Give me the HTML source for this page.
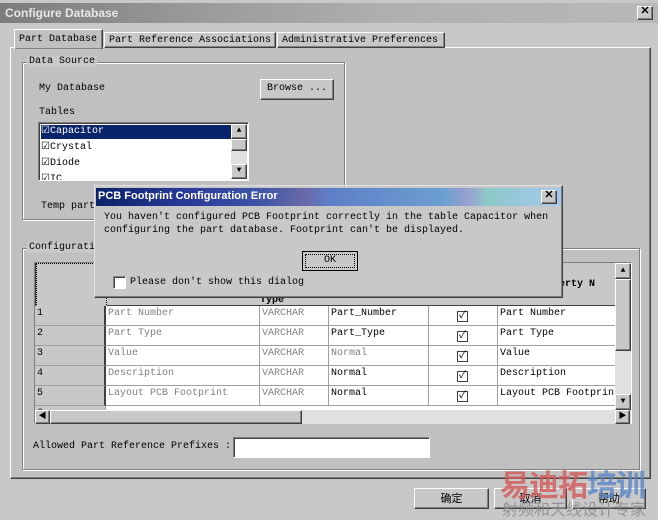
<!DOCTYPE html>
<html><head><meta charset="utf-8"><style>
*{margin:0;padding:0;box-sizing:border-box}
body{width:658px;height:518px;background:#c8c8c8;position:relative;overflow:hidden;font-family:"Liberation Mono","Noto Sans CJK SC",monospace;font-size:10px;color:#000}
.a{position:absolute;white-space:nowrap}
.raised{background:#c8c8c8;border:1px solid;border-color:#fff #404040 #404040 #fff;box-shadow:inset -1px -1px #808080}
.sunk{border:1px solid;border-color:#808080 #fff #fff #808080;box-shadow:inset 1px 1px #404040}
.grp{border:1px solid #808080;box-shadow:1px 1px #fff,inset 1px 1px #fff}
.lbl{background:#c8c8c8;padding:0 2px}
.btn{text-align:center;line-height:18px}
.cell{position:absolute;height:20px;border-right:1px solid #a0a0a0;border-bottom:1px solid #a0a0a0;background:#fff;padding:2px 2px;white-space:nowrap;overflow:hidden}
.g{color:#808080}
.cb{position:absolute;width:11px;height:11px;border:1px solid #404040;background:#fff;font-size:10px;line-height:9px;text-align:center}
</style></head><body>
<div class="a" style="left:0;top:3px;width:658px;height:20px;background:linear-gradient(90deg,#7c7c7c 0,#9a9a9a 30%,#b0b0b0 60%,#b8b8b8 100%)"></div>
<div class="a" style="left:5px;top:6px;color:#e8e8e8;font-family:'Liberation Sans',sans-serif;font-weight:bold;font-size:12px">Configure Database</div>
<div class="a raised btn" style="left:637px;top:6px;width:16px;height:14px;line-height:11px;font-weight:bold;font-size:11px">✕</div>
<div class="a raised" style="left:10px;top:47px;width:641px;height:432px;background:#c0c0c0"></div>
<div class="a raised" style="left:14px;top:29px;width:89px;height:20px;border-bottom:none;background:#c0c0c0;padding:4px 4px">Part Database</div>
<div class="a raised" style="left:104px;top:32px;width:172px;height:16px;padding:2px 4px">Part Reference Associations</div>
<div class="a raised" style="left:277px;top:32px;width:168px;height:16px;padding:2px 4px">Administrative Preferences</div>
<div class="a grp" style="left:22px;top:62px;width:323px;height:158px"></div>
<div class="a lbl" style="left:27px;top:56px">Data Source</div>
<div class="a" style="left:39px;top:83px">My Database</div>
<div class="a raised btn" style="left:260px;top:79px;width:74px;height:21px">Browse ...</div>
<div class="a" style="left:39px;top:107px">Tables</div>
<div class="a sunk" style="left:38px;top:122px;width:211px;height:59px;background:#fff;overflow:hidden">
 <div class="a" style="left:2px;top:2px;width:190px;height:14px;background:#0a246a"></div>
 <div class="a" style="left:2px;top:2px;line-height:14px;color:#fff">☑Capacitor</div>
 <div class="a" style="left:2px;top:18px;line-height:14px">☑Crystal</div>
 <div class="a" style="left:2px;top:34px;line-height:14px">☑Diode</div>
 <div class="a" style="left:2px;top:50px;line-height:14px">☑IC</div>
 <div class="a" style="left:192px;top:1px;width:16px;height:55px;background:#e0e0e0"></div>
 <div class="a raised btn" style="left:192px;top:1px;width:16px;height:15px;line-height:12px;font-size:8px">▲</div>
 <div class="a raised" style="left:192px;top:16px;width:16px;height:12px"></div>
 <div class="a raised btn" style="left:192px;top:41px;width:16px;height:15px;line-height:12px;font-size:8px">▼</div>
</div>
<div class="a" style="left:41px;top:201px">Temp part</div>
<div class="a grp" style="left:22px;top:248px;width:618px;height:222px"></div>
<div class="a lbl" style="left:27px;top:242px">Configuration</div>
<div class="a sunk" style="left:34px;top:262px;width:598px;height:162px;background:#808080;overflow:hidden">
 <div class="a" style="left:1px;top:0;width:71px;height:44px;background:#c8c8c8;border:1px dotted #000"></div>
 <div class="a" style="left:72px;top:0;width:510px;height:44px;background:#c8c8c8;border-bottom:2px solid #404040"></div>
 <div class="a" style="left:225px;top:32px;font-weight:bold">Type</div>
 <div class="a" style="left:500px;top:16px;font-weight:bold">Property N</div>
 <div class="a" style="left:1px;top:44px;width:581px;height:104px;background:#fff"></div>
</div>
<div class="a" style="left:35px;top:306px;width:580px;height:104px;overflow:hidden">
 <div style="position:relative">
 <div class="cell" style="left:0;top:0;width:71px;background:#c8c8c8;border-right:2px solid #404040">1</div><div class="cell g" style="left:71px;top:0;width:154px">Part Number</div><div class="cell g" style="left:225px;top:0;width:69px">VARCHAR</div><div class="cell" style="left:294px;top:0;width:100px">Part_Number</div><div class="cell" style="left:394px;top:0;width:69px"></div><div class="cell" style="left:463px;top:0;width:120px">Part Number</div>
 <div class="cell" style="left:0;top:20px;width:71px;background:#c8c8c8;border-right:2px solid #404040">2</div><div class="cell g" style="left:71px;top:20px;width:154px">Part Type</div><div class="cell g" style="left:225px;top:20px;width:69px">VARCHAR</div><div class="cell" style="left:294px;top:20px;width:100px">Part_Type</div><div class="cell" style="left:394px;top:20px;width:69px"></div><div class="cell" style="left:463px;top:20px;width:120px">Part Type</div>
 <div class="cell" style="left:0;top:40px;width:71px;background:#c8c8c8;border-right:2px solid #404040">3</div><div class="cell g" style="left:71px;top:40px;width:154px">Value</div><div class="cell g" style="left:225px;top:40px;width:69px">VARCHAR</div><div class="cell g" style="left:294px;top:40px;width:100px">Normal</div><div class="cell" style="left:394px;top:40px;width:69px"></div><div class="cell" style="left:463px;top:40px;width:120px">Value</div>
 <div class="cell" style="left:0;top:60px;width:71px;background:#c8c8c8;border-right:2px solid #404040">4</div><div class="cell g" style="left:71px;top:60px;width:154px">Description</div><div class="cell g" style="left:225px;top:60px;width:69px">VARCHAR</div><div class="cell" style="left:294px;top:60px;width:100px">Normal</div><div class="cell" style="left:394px;top:60px;width:69px"></div><div class="cell" style="left:463px;top:60px;width:120px">Description</div>
 <div class="cell" style="left:0;top:80px;width:71px;background:#c8c8c8;border-right:2px solid #404040">5</div><div class="cell g" style="left:71px;top:80px;width:154px">Layout PCB Footprint</div><div class="cell g" style="left:225px;top:80px;width:69px">VARCHAR</div><div class="cell" style="left:294px;top:80px;width:100px">Normal</div><div class="cell" style="left:394px;top:80px;width:69px"></div><div class="cell" style="left:463px;top:80px;width:120px">Layout PCB Footprin</div>
 <div class="cell" style="left:0;top:100px;width:71px;background:#c8c8c8">6</div>
 <div class="cb" style="left:422px;top:5px">✓</div><div class="cb" style="left:422px;top:25px">✓</div><div class="cb" style="left:422px;top:45px">✓</div><div class="cb" style="left:422px;top:65px">✓</div><div class="cb" style="left:422px;top:85px">✓</div>
 </div>
</div>
<div class="a" style="left:615px;top:263px;width:16px;height:147px;background:#e0e0e0"></div>
<div class="a raised btn" style="left:615px;top:263px;width:16px;height:16px;line-height:13px;font-size:8px">▲</div>
<div class="a raised" style="left:615px;top:279px;width:16px;height:72px"></div>
<div class="a raised btn" style="left:615px;top:394px;width:16px;height:16px;line-height:13px;font-size:8px">▼</div>
<div class="a" style="left:35px;top:410px;width:596px;height:14px;background:#e0e0e0"></div>
<div class="a raised btn" style="left:35px;top:410px;width:15px;height:14px;line-height:11px;font-size:8px">◀</div>
<div class="a raised" style="left:50px;top:410px;width:252px;height:14px"></div>
<div class="a raised btn" style="left:615px;top:410px;width:15px;height:14px;line-height:11px;font-size:8px">▶</div>
<div class="a" style="left:33px;top:441px">Allowed Part Reference Prefixes :</div>
<div class="a sunk" style="left:233px;top:437px;width:197px;height:21px;background:#fff"></div>
<div class="a raised btn" style="left:414px;top:488px;width:75px;height:21px;font-family:'Noto Sans CJK SC',sans-serif;font-size:11px">确定</div>
<div class="a raised btn" style="left:494px;top:488px;width:73px;height:21px;font-family:'Noto Sans CJK SC',sans-serif;font-size:11px">取消</div>
<div class="a raised btn" style="left:572px;top:488px;width:74px;height:21px;font-family:'Noto Sans CJK SC',sans-serif;font-size:11px">帮助</div>
<div class="a" style="left:500px;top:466px;font-family:'Noto Sans CJK SC',sans-serif;font-weight:bold;font-size:30px;line-height:34px;letter-spacing:-1px;color:#d45a5a;opacity:.8">易迪拓<span style="color:#5a86c8">培训</span></div>
<div class="a" style="left:502px;top:499px;font-family:'Noto Sans CJK SC',sans-serif;font-size:16px;line-height:18px;color:#888;opacity:.8">射频和天线设计专家</div>
<div class="a raised" style="left:94px;top:185px;width:469px;height:113px;border-color:#e0e0e0 #404040 #404040 #e0e0e0"></div>
<div class="a" style="left:96px;top:188px;width:465px;height:18px;background:linear-gradient(90deg,#0a246a 0,#2c3a9a 20%,#3e55a8 35%,#6a6aa8 45%,#5e7ec8 50%,#6ca0d0 75%,#9aa0d0 80%,#8cc8c8 84%,#a6c8f0 100%)"></div>
<div class="a" style="left:98px;top:190px;color:#fff;font-family:'Liberation Sans',sans-serif;font-weight:bold;font-size:11px">PCB Footprint Configuration Error</div>
<div class="a raised btn" style="left:541px;top:190px;width:16px;height:14px;line-height:11px;font-weight:bold;font-size:11px">✕</div>
<div class="a" style="left:104px;top:211px;line-height:13px;white-space:pre">You haven't configured PCB Footprint correctly in the table Capacitor when
configuring the part database. Footprint can't be displayed.</div>
<div class="a btn" style="left:302px;top:251px;width:56px;height:20px;border:1px solid #000;background:#c8c8c8;line-height:16px"><div style="margin:2px;border:1px dotted #000;height:14px;line-height:12px">OK</div></div>
<div class="a sunk" style="left:113px;top:276px;width:13px;height:13px;background:#fff"></div>
<div class="a" style="left:130px;top:277px">Please don't show this dialog</div>
</body></html>
